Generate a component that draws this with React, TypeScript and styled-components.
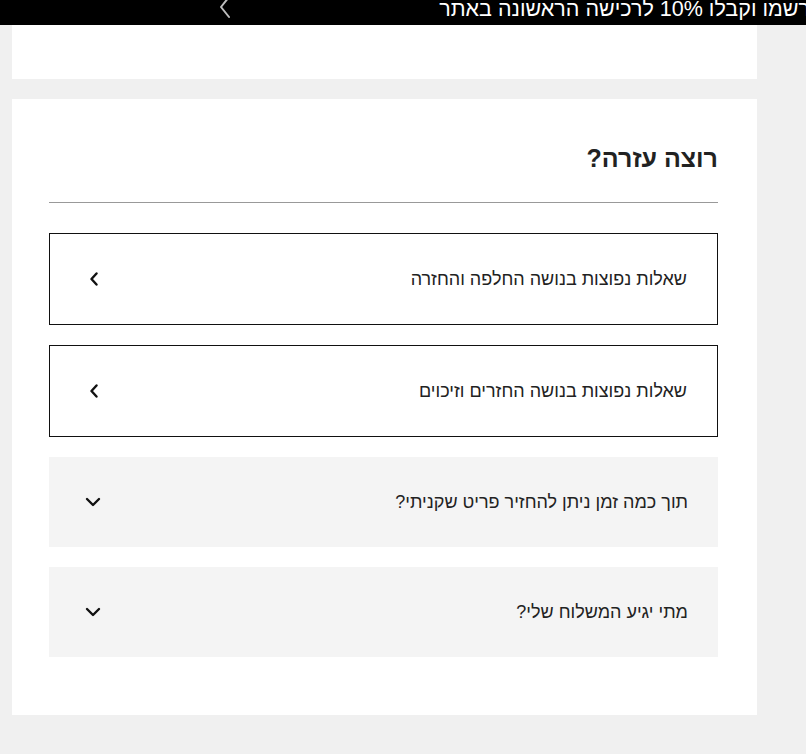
import React from "react";
import styled, { createGlobalStyle } from "styled-components";

const GlobalStyle = createGlobalStyle`
  html, body {
    margin: 0;
    padding: 0;
    background: #f0f0f0;
    font-family: "Liberation Sans", Arial, sans-serif;
    color: #222;
  }
`;

interface IFaqItem {
  title: string;
  kind: "link" | "toggle";
}

const items: IFaqItem[] = [
  { title: "שאלות נפוצות בנושה החלפה והחזרה", kind: "link" },
  { title: "שאלות נפוצות בנושה החזרים וזיכוים", kind: "link" },
  { title: "תוך כמה זמן ניתן להחזיר פריט שקניתי?", kind: "toggle" },
  { title: "מתי יגיע המשלוח שלי?", kind: "toggle" },
];

const ChevronLeft = () => (
  <svg width="10" height="14" viewBox="0 0 10 14">
    <path
      d="M7.5 1.5 L2.5 7 L7.5 12.5"
      fill="none"
      stroke="#111"
      strokeWidth="2.4"
      strokeLinecap="round"
      strokeLinejoin="round"
    />
  </svg>
);

const ChevronDown = () => (
  <svg width="16" height="10" viewBox="0 0 16 10">
    <path
      d="M2 2 L8 8 L14 2"
      fill="none"
      stroke="#111"
      strokeWidth="2.4"
      strokeLinecap="round"
      strokeLinejoin="round"
    />
  </svg>
);

const App = () => {
  return (
    <>
      <GlobalStyle />
      <TopBar>
        <PromoText>רשמו וקבלו 10% לרכישה הראשונה באתר</PromoText>
        <PromoArrow>
          <svg width="14" height="22" viewBox="0 0 14 22">
            <path
              d="M11 -3 L3 7 L11 17"
              fill="none"
              stroke="#bdbdbd"
              strokeWidth="2"
              strokeLinecap="round"
              strokeLinejoin="round"
            />
          </svg>
        </PromoArrow>
      </TopBar>
      <Page>
        <TopCard />
        <HelpCard>
          <Heading>רוצה עזרה?</Heading>
          <Divider />
          <List>
            {items.map((item) => (
              <Item key={item.title} kind={item.kind}>
                <ItemTitle>{item.title}</ItemTitle>
                <IconSlot>
                  {item.kind === "link" ? <ChevronLeft /> : <ChevronDown />}
                </IconSlot>
              </Item>
            ))}
          </List>
        </HelpCard>
      </Page>
    </>
  );
};

const TopBar = styled.div`
  direction: rtl;
  height: 25px;
  background: #000;
  display: flex;
  align-items: flex-start;
  overflow: hidden;
  white-space: nowrap;
`;

const PromoText = styled.span`
  color: #fff;
  font-size: 21.5px;
  line-height: 22px;
  margin-right: -4px;
  margin-top: -2px;
`;

const PromoArrow = styled.span`
  display: flex;
  margin-right: 207px;
`;

const Page = styled.div`
  direction: rtl;
  display: flex;
  flex-direction: column;
  gap: 20px;
  padding: 0 49px 40px 12px;
`;

const TopCard = styled.div`
  background: #fff;
  height: 54px;
`;

const HelpCard = styled.div`
  background: #fff;
  padding: 44px 39px 58px 37px;
  display: flex;
  flex-direction: column;
`;

const Heading = styled.h2`
  margin: 0;
  font-size: 25px;
  line-height: 30px;
  font-weight: 600;
  color: #222;
`;

const Divider = styled.div`
  height: 1px;
  background: #999;
  margin-top: 29px;
`;

const List = styled.div`
  display: flex;
  flex-direction: column;
  gap: 20px;
  margin-top: 30px;
`;

const Item = styled.div<{ kind: "link" | "toggle" }>`
  box-sizing: border-box;
  height: ${(p) => (p.kind === "link" ? "92px" : "90px")};
  border: ${(p) => (p.kind === "link" ? "1px solid #111" : "none")};
  background: ${(p) => (p.kind === "link" ? "#fff" : "#f4f4f4")};
  display: flex;
  align-items: center;
  justify-content: space-between;
  padding: 0 30px 0 36px;
`;

const ItemTitle = styled.span`
  font-size: 18px;
  color: #222;
`;

const IconSlot = styled.span`
  display: flex;
  align-items: center;
  justify-content: center;
  width: 16px;
`;

export default App;
